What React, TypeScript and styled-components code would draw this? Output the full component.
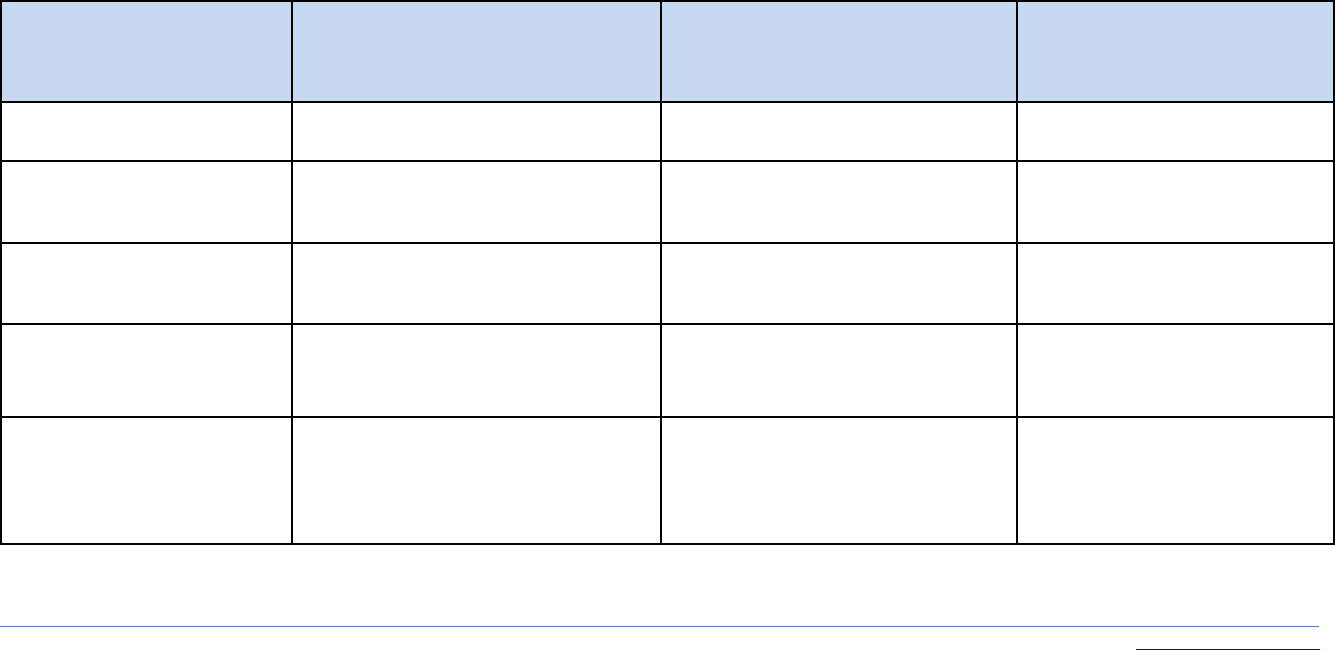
import React from "react";
import styled, { createGlobalStyle } from "styled-components";

const GlobalStyle = createGlobalStyle`
    html, body {
        margin: 0;
        padding: 0;
        background: #ffffff;
        font-family: "Liberation Sans", Arial, sans-serif;
        overflow: hidden;
    }
`

const Page = styled.div`
    width: 1335px;
    height: 650px;
    display: flex;
    flex-direction: column;
`

// black background + gaps draw the 2px cell borders
const Grid = styled.div`
    display: grid;
    grid-template-columns: 289px 367px 354px 315px;
    grid-template-rows: 99px 57px 80px 79px 91px 125px;
    gap: 2px;
    padding: 2px;
    background: #000000;
    width: 1335px;
    box-sizing: border-box;
`

const Cell = styled.div<{ $head?: boolean }>`
    background: ${p => (p.$head ? "#c6d9f1" : "#ffffff")};
`

const Rule = styled.hr`
    width: 1319px;
    margin: 81px 0 0 0;
    border: none;
    border-top: 1px solid #4f81bd;
    height: 0;
`

const Footer = styled.div`
    display: flex;
    justify-content: flex-end;
    width: 1320px;
    padding-top: 22px;
`

const PageLink = styled.div`
    width: 184px;
    height: 0;
    border-bottom: 1px solid #0000ff;
`

const columns = 4;
const rows = 6;

const App = () => {
    return (
        <Page>
            <GlobalStyle />
            <Grid>
                {Array.from({ length: rows * columns }).map((_, i) => (
                    <Cell key={i} $head={i < columns} />
                ))}
            </Grid>
            <Rule />
            <Footer>
                <PageLink />
            </Footer>
        </Page>
    );
}

export default App;
